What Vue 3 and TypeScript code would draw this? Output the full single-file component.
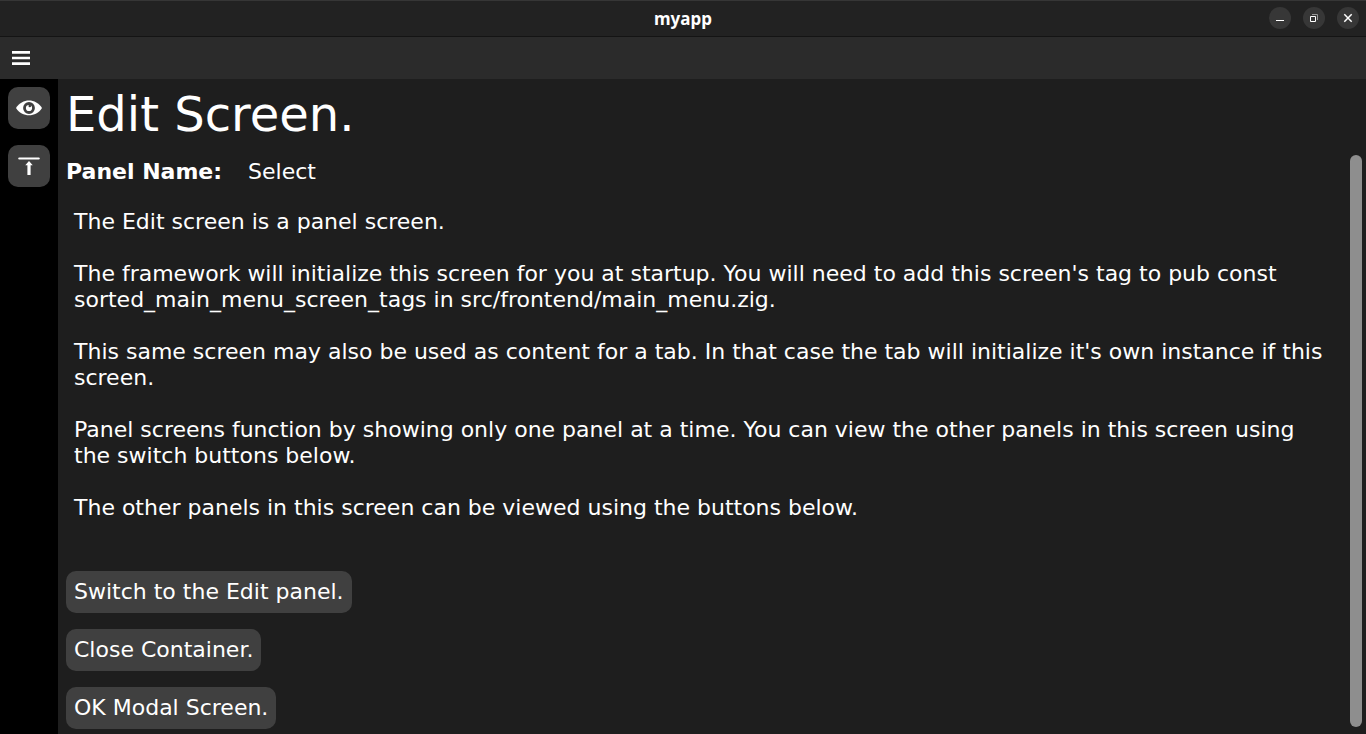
<script setup lang="ts">
const paragraphs: string[] = [
  'The Edit screen is a panel screen.',
  "The framework will initialize this screen for you at startup. You will need to add this screen's tag to pub const sorted_main_menu_screen_tags in src/frontend/main_menu.zig.",
  "This same screen may also be used as content for a tab. In that case the tab will initialize it's own instance if this screen.",
  'Panel screens function by showing only one panel at a time. You can view the other panels in this screen using the switch buttons below.',
  'The other panels in this screen can be viewed using the buttons below.',
]
const actions: string[] = ['Switch to the Edit panel.', 'Close Container.', 'OK Modal Screen.']
</script>

<template>
  <div class="window">
    <header class="titlebar">
      <span class="title">myapp</span>
      <div class="controls">
        <button class="control" type="button" aria-label="Minimize">
          <svg viewBox="0 0 22 22"><path d="M7 13.500h8" stroke="#fff" fill="none" /></svg>
        </button>
        <button class="control" type="button" aria-label="Restore">
          <svg viewBox="0 0 22 22" fill="none">
            <path d="M9 7.500h5.500v5.500" stroke="#999" />
            <path d="M7.500 9.500h5v5h-5z" stroke="#fff" />
          </svg>
        </button>
        <button class="control" type="button" aria-label="Close">
          <svg viewBox="0 0 22 22"><path d="M7.300 7.300l7.400 7.400M14.700 7.300l-7.400 7.400" stroke="#fff" stroke-width="1.500" fill="none" /></svg>
        </button>
      </div>
    </header>

    <nav class="toolbar">
      <button class="menu" type="button" aria-label="Main menu">
        <svg viewBox="0 0 26 26"><path d="M4 7.300h18M4 13h18M4 18.700h18" stroke="#fff" stroke-width="2.700" fill="none" /></svg>
      </button>
    </nav>

    <div class="body">
      <aside class="sidebar">
        <button class="tool" type="button" aria-label="View">
          <svg viewBox="0 0 26 26">
            <path d="M0 13C3 8 8 5.500 13 5.500S23 8 26 13C23 18 18 20.300 13 20.300S3 18 0 13z" fill="#fff" />
            <circle cx="13" cy="13" r="4.500" fill="none" stroke="#404040" stroke-width="2.800" />
            <circle cx="13.800" cy="11" r="1.300" fill="#404040" />
          </svg>
        </button>
        <button class="tool" type="button" aria-label="Move to top">
          <svg viewBox="0 0 26 26" fill="none" stroke="#fff">
            <path d="M3.300 5.500h19.400" stroke-width="2.200" stroke-linecap="round" />
            <path d="M13 22V10" stroke-width="3.200" />
            <path d="M9.300 12.200L13 8l3.700 4.200z" fill="#fff" stroke="none" />
          </svg>
        </button>
      </aside>

      <main class="screen">
        <h1>Edit Screen.</h1>
        <div class="scroll">
          <div class="content">
            <div class="panel-name"><strong>Panel Name:</strong><span>Select</span></div>
            <div class="text">
              <p v-for="text in paragraphs" :key="text">{{ text }}</p>
            </div>
            <div class="actions">
              <button v-for="label in actions" :key="label" type="button">{{ label }}</button>
            </div>
          </div>
          <div class="scrollbar"><div class="thumb"></div></div>
        </div>
      </main>
    </div>
  </div>
</template>

<style>
body {
  margin: 0;
  background: #1e1e1e;
}
</style>

<style scoped>
.window {
  display: flex;
  flex-direction: column;
  height: 100vh;
  overflow: hidden;
  background: #1e1e1e;
  color: #fff;
  font: 22px/26px "DejaVu Sans", sans-serif;
}
button {
  padding: 0;
  border: 0;
  color: inherit;
  font: inherit;
}
svg {
  display: block;
}
.titlebar {
  display: grid;
  grid-template-columns: 1fr auto 1fr;
  align-items: center;
  flex: none;
  box-sizing: border-box;
  height: 37px;
  border-top: 1px solid #363636;
  border-bottom: 1px solid #141414;
  background: #222;
}
.title {
  grid-column: 2;
  font: bold 17px/22px "Noto Sans", sans-serif;
}
.controls {
  display: flex;
  justify-content: flex-end;
  gap: 12px;
  padding: 0 7px 1px 0;
}
.control {
  width: 22px;
  height: 22px;
  border-radius: 50%;
  background: #373737;
}
.toolbar {
  display: flex;
  align-items: center;
  flex: none;
  height: 42px;
  padding: 0 8px;
  background: #2b2b2b;
}
.menu {
  width: 26px;
  height: 26px;
  background: none;
}
.body {
  display: flex;
  flex: 1;
  min-height: 0;
}
.sidebar {
  display: flex;
  flex-direction: column;
  gap: 16px;
  flex: none;
  padding: 8px;
  background: #000;
}
.tool {
  padding: 8px;
  border-radius: 10px;
  background: #404040;
}
.tool svg {
  width: 26px;
  height: 26px;
}
.screen {
  display: flex;
  flex-direction: column;
  flex: 1;
  min-width: 0;
}
h1 {
  margin: 0;
  padding: 7px 8px 13px;
  font-size: 48px;
  font-weight: normal;
  line-height: 56px;
}
.scroll {
  display: flex;
  flex: 1;
  min-height: 0;
}
.content {
  flex: 1;
  min-width: 0;
  padding: 4px 8px;
}
.panel-name {
  display: flex;
  gap: 26px;
}
.text {
  padding: 24px 8px 50px;
}
p {
  margin: 0 0 26px;
}
p:last-child {
  margin: 0;
}
.actions {
  display: flex;
  flex-direction: column;
  align-items: flex-start;
  gap: 16px;
}
.actions button {
  padding: 8px;
  border-radius: 10px;
  background: #404040;
}
.scrollbar {
  display: flex;
  flex: none;
  width: 12px;
  padding: 0 4px 7px;
}
.thumb {
  flex: 1;
  border-radius: 6px;
  background: #8e8e8e;
}
</style>
